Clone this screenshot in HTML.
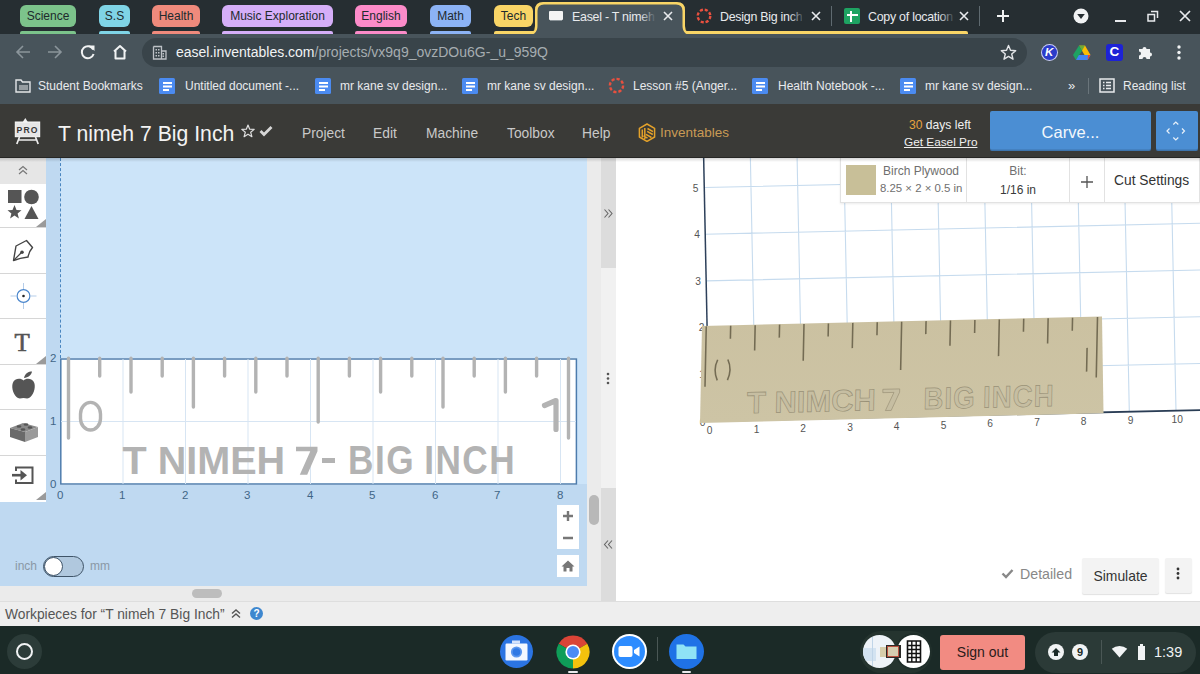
<!DOCTYPE html>
<html><head><meta charset="utf-8">
<style>
*{box-sizing:border-box;margin:0;padding:0}
html,body{width:1200px;height:674px;overflow:hidden;background:#fff;font-family:"Liberation Sans",sans-serif}
.abs{position:absolute}
#tabs{left:0;top:0;width:1200px;height:34px;background:#262e32}
.chip{position:absolute;top:5px;height:22px;border-radius:6px;font-size:12px;line-height:23px;text-align:center;color:#202a2d}
.gline{position:absolute;top:31px;height:4px;border-radius:2px 2px 0 0}
#toolbar{left:0;top:34px;width:1200px;height:70px;background:#48545b}
#omni{left:142px;top:38px;width:885px;height:29px;border-radius:15px;background:#39444a}
.bm{position:absolute;top:78px;font-size:12px;color:#e8eaed;line-height:16px;white-space:nowrap}
.doc{position:absolute;top:78px;width:16px;height:16px;background:#4b8bf1;border-radius:1.5px}
.doc:before{content:"";position:absolute;left:3.5px;top:3.5px;width:9px;height:2px;background:#fff;box-shadow:0 3.5px 0 #fff}
.doc:after{content:"";position:absolute;left:3.5px;top:10.5px;width:6px;height:2px;background:#fff}
.tabt{position:absolute;top:9px;font-size:12.4px;letter-spacing:-0.25px;color:#e8eaed;white-space:nowrap;line-height:16px}
#hdr{left:0;top:104px;width:1200px;height:54px;background:#3a3a37}
.mnu{top:126px;font-size:13.8px;line-height:16px;color:#c9c9c9;white-space:nowrap}
.lbl{font-size:11.5px;line-height:13px;color:#3f6687}
.l3{font-size:9px;line-height:11px;color:#444}
</style></head><body>
<div id="tabs" class="abs">
  <div class="chip" style="left:20px;width:56px;background:#7cc38b">Science</div>
  <div class="gline" style="left:20px;width:56px;background:#7cc38b"></div>
  <div class="chip" style="left:99px;width:31px;background:#7fd4e6">S.S</div>
  <div class="gline" style="left:99px;width:31px;background:#7fd4e6"></div>
  <div class="chip" style="left:152px;width:48px;background:#ef8a7c">Health</div>
  <div class="gline" style="left:152px;width:48px;background:#ef8a7c"></div>
  <div class="chip" style="left:222px;width:111px;background:#d5aef8">Music Exploration</div>
  <div class="gline" style="left:222px;width:111px;background:#d5aef8"></div>
  <div class="chip" style="left:355px;width:52px;background:#fc8bc9">English</div>
  <div class="gline" style="left:355px;width:52px;background:#fc8bc9"></div>
  <div class="chip" style="left:430px;width:41px;background:#8cb3f5">Math</div>
  <div class="gline" style="left:430px;width:41px;background:#8cb3f5"></div>
  <div class="chip" style="left:494px;width:39px;background:#f9d566">Tech</div>
  <!-- yellow group line -->
  <div class="gline" style="left:494px;width:474px;background:#f9d566"></div>
  <!-- active tab -->
  <svg class="abs" style="left:525px;top:0" width="170" height="36">
    <path d="M0 34 Q10 34 10 26 L10 10 Q10 2 18 2 L152 2 Q160 2 160 10 L160 26 Q160 34 170 34 L170 36 L0 36Z" fill="#f9d566"/>
    <path d="M0 36 Q12.5 36 12.5 26 L12.5 11 Q12.5 4.5 19 4.5 L151 4.5 Q157.5 4.5 157.5 11 L157.5 26 Q157.5 36 170 36Z" fill="#48545b"/>
  </svg>
  <div class="abs" style="left:549px;top:11px;width:14px;height:8.5px;background:#f4f4f4;border-radius:1px"></div><div class="abs" style="left:550px;top:19.5px;width:12px;height:1.5px;background:#8a9398"></div>
  <div class="tabt" style="left:572px;width:84px;overflow:hidden">Easel - T nimeh</div>
  <div class="abs" style="left:640px;top:6px;width:17px;height:20px;background:linear-gradient(90deg,rgba(72,84,91,0),#48545b 95%)"></div>
  <svg class="abs" style="left:663px;top:11px" width="10" height="10"><path d="M1 1L9 9M9 1L1 9" stroke="#e8eaed" stroke-width="1.6"/></svg>
  <!-- tab 2 -->
  <svg class="abs" style="left:696px;top:8px" width="16" height="16"><circle cx="8" cy="8" r="6.3" fill="none" stroke="#e8503f" stroke-width="2.4" stroke-dasharray="3.1 1.85"/></svg>
  <div class="tabt" style="left:720px;width:82px;overflow:hidden">Design Big inch</div>
  <div class="abs" style="left:789px;top:6px;width:17px;height:20px;background:linear-gradient(90deg,rgba(38,46,50,0),#262e32 95%)"></div>
  <svg class="abs" style="left:811px;top:11px" width="10" height="10"><path d="M1 1L9 9M9 1L1 9" stroke="#e8eaed" stroke-width="1.6"/></svg>
  <div class="abs" style="left:831px;top:6px;width:1px;height:20px;background:#5f6a70"></div>
  <!-- tab 3 -->
  <div class="abs" style="left:844px;top:8px;width:16px;height:16px;background:#1ea362;border-radius:2px"></div>
  <div class="abs" style="left:846.5px;top:13.5px;width:11px;height:2px;background:#fff"></div>
  <div class="abs" style="left:850px;top:10.5px;width:2px;height:11px;background:#fff"></div>
  <div class="tabt" style="left:868px;width:86px;overflow:hidden">Copy of location</div>
  <div class="abs" style="left:939px;top:6px;width:17px;height:20px;background:linear-gradient(90deg,rgba(38,46,50,0),#262e32 95%)"></div>
  <svg class="abs" style="left:959px;top:11px" width="10" height="10"><path d="M1 1L9 9M9 1L1 9" stroke="#e8eaed" stroke-width="1.6"/></svg>
  <div class="abs" style="left:979px;top:6px;width:1px;height:20px;background:#5f6a70"></div>
  <svg class="abs" style="left:996px;top:9px" width="14" height="14"><path d="M7 1V13M1 7H13" stroke="#f1f3f4" stroke-width="2"/></svg>
  <!-- window controls -->
  <svg class="abs" style="left:1073px;top:8px" width="16" height="16"><circle cx="8" cy="8" r="7.5" fill="#f1f3f4"/><path d="M4.2 6H11.8L8 11Z" fill="#262e32"/></svg>
  <div class="abs" style="left:1115px;top:20px;width:11px;height:2px;background:#e8eaed"></div>
  <svg class="abs" style="left:1147px;top:10px" width="12" height="12"><path d="M1 4.5H7.5V11H1Z M4 1.5H10.5V8" fill="none" stroke="#e8eaed" stroke-width="1.5"/></svg>
  <svg class="abs" style="left:1179px;top:10px" width="12" height="12"><path d="M1 1L11 11M11 1L1 11" stroke="#e8eaed" stroke-width="1.7"/></svg>
</div>
<div id="toolbar" class="abs"></div>
<!-- nav icons -->
<svg class="abs" style="left:15px;top:44px" width="16" height="16"><path d="M15 8H2M8 2L2 8L8 14" fill="none" stroke="#8b959b" stroke-width="1.6"/></svg>
<svg class="abs" style="left:47px;top:44px" width="16" height="16"><path d="M1 8H14M8 2L14 8L8 14" fill="none" stroke="#8b959b" stroke-width="1.6"/></svg>
<svg class="abs" style="left:79px;top:43px" width="18" height="18"><path d="M14.2 6.5A6 6 0 1 0 14.6 11" fill="none" stroke="#f1f3f4" stroke-width="2"/><path d="M10 2.5H15.5V8Z" fill="#f1f3f4"/></svg>
<svg class="abs" style="left:111px;top:43px" width="18" height="18"><path d="M3 8.5L9 3L15 8.5M4.5 7.5V15.5H13.5V7.5" fill="none" stroke="#f1f3f4" stroke-width="2" stroke-linejoin="round"/></svg>
<div id="omni" class="abs"></div>
<svg class="abs" style="left:152px;top:45px" width="15" height="15"><path d="M1.5 1.5H9.5V14M1.5 1.5V14H14V6H9.5" fill="none" stroke="#bdc1c6" stroke-width="1.3"/><path d="M3.5 4h1.5v1.5h-1.5zM6 4h1.5v1.5h-1.5zM3.5 7h1.5v1.5h-1.5zM6 7h1.5v1.5h-1.5zM3.5 10h1.5v1.5h-1.5zM6 10h1.5v1.5h-1.5zM10.5 8h1.5v1.5h-1.5zM10.5 10.5h1.5v1.5h-1.5z" fill="#bdc1c6"/></svg>
<div class="abs" style="left:176px;top:44px;font-size:14px;line-height:16px;color:#f1f3f4;white-space:nowrap">easel.inventables.com<span style="color:#a6adb1">/projects/vx9q9_ovzDOu6G-_u_959Q</span></div>
<svg class="abs" style="left:1000px;top:44px" width="17" height="17"><path d="M8.5 1.5L10.5 6.3L15.7 6.7L11.7 10L13 15.2L8.5 12.4L4 15.2L5.3 10L1.3 6.7L6.5 6.3Z" fill="none" stroke="#e3e5e8" stroke-width="1.4" stroke-linejoin="round"/></svg>
<!-- extensions -->
<div class="abs" style="left:1041.5px;top:44.5px;width:15.5px;height:15.5px;border-radius:50%;background:#2b3bc9;color:#fff;font:bold italic 11.5px/15.5px 'Liberation Sans',sans-serif;text-align:center;box-shadow:0 0 0 1px #c9cdf5">K</div>
<svg class="abs" style="left:1073px;top:45px" width="18" height="15"><path d="M6 0.5H12L17.5 10H11.5Z" fill="#fbbc04"/><path d="M6 0.5L9 5.7L3 15L0 10Z" fill="#1ea362"/><path d="M3 15L5.9 10H17.5L14.6 15Z" fill="#4285f4"/><path d="M14.6 15L17.5 10H15Z" fill="#ea4335"/><path d="M6 0.5L9 5.7L12 0.5Z" fill="#0f9d58" opacity=".6"/></svg>
<div class="abs" style="left:1106px;top:44px;width:16.5px;height:16.5px;border-radius:3px;background:#1d22d6;color:#fff;font:bold 13.5px/16.5px 'Liberation Sans',sans-serif;text-align:center">C</div>
<svg class="abs" style="left:1137px;top:44px" width="16" height="16"><path d="M2 5H5.5A2 2 0 1 1 9.5 5H13V8.5A2 2 0 1 1 13 12.5V15H9.5A2 2 0 1 0 5.5 15H2V11.5A2 2 0 1 0 2 7.5Z" fill="#f1f3f4"/></svg>
<svg class="abs" style="left:1176px;top:44px" width="6" height="17"><circle cx="3" cy="3" r="1.7" fill="#f1f3f4"/><circle cx="3" cy="8.5" r="1.7" fill="#f1f3f4"/><circle cx="3" cy="14" r="1.7" fill="#f1f3f4"/></svg>
<!-- bookmarks -->
<svg class="abs" style="left:15px;top:79px" width="16" height="14"><path d="M1 1H6L7.5 3H15V13H1Z" fill="none" stroke="#e3e6e8" stroke-width="1.4"/><path d="M4 6h9v5h-9z" fill="#e3e6e8" opacity=".5"/></svg>
<div class="bm" style="left:38px">Student Bookmarks</div>
<div class="doc" style="left:159px"></div><div class="bm" style="left:185px">Untitled document -...</div>
<div class="doc" style="left:315px"></div><div class="bm" style="left:340px">mr kane sv design...</div>
<div class="doc" style="left:462px"></div><div class="bm" style="left:487px">mr kane sv design...</div>
<svg class="abs" style="left:608px;top:77px" width="17" height="17"><circle cx="8.5" cy="8.5" r="6.6" fill="none" stroke="#e8503f" stroke-width="2.4" stroke-dasharray="3.2 1.95"/></svg>
<div class="bm" style="left:633px">Lesson #5 (Anger...</div>
<div class="doc" style="left:752px"></div><div class="bm" style="left:778px">Health Notebook -...</div>
<div class="doc" style="left:900px"></div><div class="bm" style="left:925px">mr kane sv design...</div>
<div class="bm" style="left:1068px;font-size:13px">»</div>
<div class="abs" style="left:1088px;top:78px;width:1px;height:16px;background:#6a757b"></div>
<svg class="abs" style="left:1099px;top:78px" width="16" height="15"><rect x="1" y="1" width="14" height="13" fill="none" stroke="#e8eaed" stroke-width="1.5"/><path d="M4 4.5h1.5M7 4.5h5M4 7.5h1.5M7 7.5h5M4 10.5h1.5M7 10.5h5" stroke="#e8eaed" stroke-width="1.3"/></svg>
<div class="bm" style="left:1123px">Reading list</div>


<div id="hdr" class="abs"></div>
<!-- PRO icon -->
<svg class="abs" style="left:13px;top:116px" width="28" height="30"><path d="M12.3 2L15 6.3H9.6Z" fill="#eee"/><rect x="2.3" y="6" width="24.4" height="14.7" fill="#e6e6e6" stroke="#fafafa" stroke-width="1"/><path d="M6.5 21L3.8 28M22.5 21L25.2 28M5.6 24H23.4" stroke="#eee" stroke-width="1.7"/><text x="14.6" y="16.6" font-family="Liberation Sans" font-weight="bold" font-size="8.6" text-anchor="middle" fill="#383838" letter-spacing="1.2">PRO</text></svg>
<div class="abs" style="left:58px;top:121.5px;font-size:21.2px;line-height:24px;color:#f3f3f3;white-space:nowrap">T nimeh 7 Big Inch</div>
<svg class="abs" style="left:241px;top:124px" width="14" height="14"><path d="M7 1L8.7 5.2L13.2 5.4L9.7 8.3L10.9 12.7L7 10.2L3.1 12.7L4.3 8.3L0.8 5.4L5.3 5.2Z" fill="none" stroke="#e0e0e0" stroke-width="1.2" stroke-linejoin="round"/></svg>
<svg class="abs" style="left:259px;top:125px" width="14" height="12"><path d="M1.5 6L5 9.5L12.5 2" fill="none" stroke="#d6d6d6" stroke-width="2.8"/></svg>
<div class="abs mnu" style="left:302px">Project</div>
<div class="abs mnu" style="left:373px">Edit</div>
<div class="abs mnu" style="left:426px">Machine</div>
<div class="abs mnu" style="left:507px">Toolbox</div>
<div class="abs mnu" style="left:582px">Help</div>
<svg class="abs" style="left:638px;top:123px" width="18" height="19"><g fill="none" stroke="#e3a12a" stroke-width="1.5" stroke-linejoin="round"><path d="M9 1L16.6 5.4V14L9 18.4L1.4 14V5.4Z"/><path d="M4.3 6.5V14.5M6.8 5V16M9.5 5.5L15 8.6M9.2 8.3L14.8 11.5M5.5 12.8L9.5 15.2M8 11.3L13.5 14.5"/></g></svg>
<div class="abs" style="left:660px;top:125px;font-size:13.5px;line-height:16px;color:#c99a55;white-space:nowrap">Inventables</div>
<div class="abs" style="left:909px;top:118px;font-size:12.1px;line-height:14px;color:#f0f0f0;white-space:nowrap"><span style="color:#e7a33e">30</span> days left</div>
<div class="abs" style="left:904px;top:135px;font-size:11.8px;line-height:14px;color:#f0f0f0;white-space:nowrap;text-decoration:underline">Get Easel Pro</div>
<div class="abs" style="left:990px;top:111px;width:161px;height:40px;background:#4b8ed3;border-radius:2px;box-shadow:inset 0 -1.5px 0 rgba(0,0,0,.18);color:#f4f8fc;font-size:16.5px;line-height:43px;text-align:center">Carve...</div>
<div class="abs" style="left:1156px;top:111px;width:42px;height:40px;background:#4b8ed3;border-radius:2px;box-shadow:inset 0 -1.5px 0 rgba(0,0,0,.18)"></div>
<svg class="abs" style="left:1163px;top:118px" width="26" height="26"><path d="M10.3 6.5L12.8 4L15.3 6.5M10.3 19.5L12.8 22L15.3 19.5M6.5 10.5L4 13L6.5 15.5M19 10.5L21.5 13L19 15.5" fill="none" stroke="#e8f1fa" stroke-width="1.2"/></svg>

<!-- main 2D canvas -->
<div class="abs" style="left:0;top:158px;width:587px;height:428px;background:#bfd9f1"></div>
<div class="abs" style="left:60px;top:158px;width:527px;height:326px;background:#cce4f9"></div>
<div class="abs" style="left:60px;top:158px;width:0;height:200px;border-left:1px dashed #4a86c0"></div>
<!-- workpiece -->
<div class="abs" style="left:60px;top:358px;width:517px;height:127px;background:#fff"></div>
<svg class="abs" style="left:0;top:0" width="600" height="500"><rect x="60.8" y="359" width="515.6" height="125" fill="none" stroke="#4d7cad" stroke-width="1.5"/></svg>
<svg class="abs" style="left:0;top:150px" width="600" height="360">
  <g stroke="#d7e5f3" stroke-width="1">
    <path d="M123 209V334M185.5 209V334M248 209V334M310.5 209V334M373 209V334M435.5 209V334M498 209V334M560.5 209V334M61 271.5H576"/>
  </g>
  <g stroke="#b3b3b3" stroke-width="3.4" stroke-linecap="round">
    <path d="M68.5 208.3V288M99.7 208.3V226M131 208.3V242M162.2 208.3V226M193.4 208.3V257M224.6 208.3V226M255.8 208.3V242M287 208.3V226M318.2 208.3V272M349.4 208.3V226M380.6 208.3V242M411.8 208.3V226M443 208.3V257M474.2 208.3V226M505.4 208.3V242M536.6 208.3V226M568.5 208.3V288"/>
  </g>
</svg>
<svg class="abs" style="left:70px;top:390px" width="40" height="50"><rect x="10.5" y="12.4" width="20" height="27.6" rx="10" ry="11.5" fill="none" stroke="#b3b3b3" stroke-width="3.4"/></svg>
<svg class="abs" style="left:535px;top:390px" width="30" height="50"><path d="M21 39.5V10.5L9.5 15.5" fill="none" stroke="#b3b3b3" stroke-width="5.2" stroke-linecap="round" stroke-linejoin="round"/></svg>
<div class="abs" style="left:122.5px;top:440.3px;font-size:39.6px;line-height:40px;font-weight:bold;color:#b3b3b3;white-space:nowrap">T NIMEH</div>
<svg class="abs" style="left:0;top:0" width="600" height="500"><path d="M296 446.8H317.5V451.2L307.2 474.7H299.8L310.3 451.2H296Z" fill="#b3b3b3"/></svg>
<div class="abs" style="left:322px;top:457.5px;width:13px;height:5.5px;background:#b3b3b3"></div>
<div class="abs" style="left:348px;top:440px;font-size:40px;line-height:40px;font-weight:bold;color:#b3b3b3;white-space:nowrap;transform:scaleX(0.88);transform-origin:0 0;letter-spacing:1.7px;word-spacing:-2.5px">BIG INCH</div>
<div class="abs lbl" style="left:50px;top:352px">2</div>
<div class="abs lbl" style="left:50px;top:415px">1</div>
<div class="abs lbl" style="left:50px;top:478px">0</div>
<div class="abs lbl" style="left:57px;top:488.5px">0</div>
<div class="abs lbl" style="left:119px;top:488.5px">1</div>
<div class="abs lbl" style="left:182px;top:488.5px">2</div>
<div class="abs lbl" style="left:244px;top:488.5px">3</div>
<div class="abs lbl" style="left:307px;top:488.5px">4</div>
<div class="abs lbl" style="left:369px;top:488.5px">5</div>
<div class="abs lbl" style="left:432px;top:488.5px">6</div>
<div class="abs lbl" style="left:494px;top:488.5px">7</div>
<div class="abs lbl" style="left:557px;top:488.5px">8</div>

<!-- left tool bar -->
<div class="abs" style="left:0;top:158px;width:46px;height:26px;background:#e6e6e6"></div>
<svg class="abs" style="left:17px;top:165px" width="12" height="10"><path d="M2 5L6 1.5L10 5M2 9L6 5.5L10 9" fill="none" stroke="#777" stroke-width="1.2"/></svg>
<div class="abs" style="left:0;top:184px;width:46px;height:318px;background:#fff"></div>
<div class="abs" style="left:0;top:227px;width:46px;height:1px;background:#d6d6d6"></div>
<div class="abs" style="left:0;top:273px;width:46px;height:1px;background:#d6d6d6"></div>
<div class="abs" style="left:0;top:318px;width:46px;height:1px;background:#d6d6d6"></div>
<div class="abs" style="left:0;top:364px;width:46px;height:1px;background:#d6d6d6"></div>
<div class="abs" style="left:0;top:409px;width:46px;height:1px;background:#d6d6d6"></div>
<div class="abs" style="left:0;top:455px;width:46px;height:1px;background:#d6d6d6"></div>
<svg class="abs" style="left:0;top:184px" width="46" height="317">
  <path d="M46 35L36 43H46Z M46 172L36 180H46Z M46 308L36 316H46Z" fill="#9a9a9a"/>
  <rect x="8" y="6" width="13.5" height="13" fill="#555"/>
  <circle cx="31.5" cy="13" r="7.3" fill="#555"/>
  <path d="M14.5 21L16.5 26L21.5 26.3L17.6 29.4L18.9 34.5L14.5 31.6L10.1 34.5L11.4 29.4L7.5 26.3L12.5 26Z" fill="#555"/>
  <path d="M31.5 22L38.5 35H24.5Z" fill="#555"/>
  <g transform="translate(3,47)">
    <path d="M10.5 29.5Q12 21 13 15L23.5 9.5L29.5 16.5Q26 20.5 25 26Q17 27 10.5 29.5Z" fill="none" stroke="#444" stroke-width="1.4" stroke-linejoin="round"/>
    <path d="M10.5 29.5L18 22" stroke="#444" stroke-width="1.2"/>
    <circle cx="19" cy="21.2" r="1.8" fill="#444"/>
  </g>
  <g transform="translate(0,89)">
    <circle cx="23.5" cy="23" r="6.4" fill="none" stroke="#4a86cc" stroke-width="1.2"/>
    <circle cx="23.5" cy="23" r="1.3" fill="#222"/>
    <path d="M23.5 10V16M23.5 30V36M10.5 23H16.5M30.5 23H36.5" stroke="#b5cde9" stroke-width="1"/>
  </g>
</svg>
<div class="abs" style="left:14.5px;top:327.5px;font-family:'Liberation Serif',serif;font-size:25px;line-height:30px;font-weight:normal;color:#555;-webkit-text-stroke:0.6px #555">T</div>
<svg class="abs" style="left:0;top:364px" width="46" height="137">
  <path d="M23.5 16.5C21 14 14.5 14 12.8 19C11 24 14 32 18 34C20 35 21.5 34 23.5 34C25.5 34 27 35 29 34C33 32 36 24 34.3 19C32.5 14 26 14 23.5 16.5Z" fill="#555"/>
  <path d="M24 14C25 9 28.5 7.5 32 7.5C31.5 11 28 13.5 24 14Z" fill="#555"/>
  <g transform="translate(1,47)">
    <path d="M9 17L22 12L37 16L24 21Z" fill="#8a8a8a"/>
    <path d="M9 17V26L24 31V21Z" fill="#6a6a6a"/>
    <path d="M24 21V31L37 26V16Z" fill="#9a9a9a"/>
    <ellipse cx="18" cy="15.5" rx="2.4" ry="1.3" fill="#555"/><ellipse cx="25" cy="13.5" rx="2.4" ry="1.3" fill="#555"/>
    <ellipse cx="22" cy="18.5" rx="2.4" ry="1.3" fill="#555"/><ellipse cx="29" cy="16.5" rx="2.4" ry="1.3" fill="#555"/>
  </g>
  <g transform="translate(0,91)">
    <path d="M16 16V12.5H32.5V28H16V24.5" fill="none" stroke="#555" stroke-width="2"/>
    <path d="M12 20.2H24" stroke="#555" stroke-width="2.6"/>
    <path d="M20.5 15L27 20.2L20.5 25.4Z" fill="#555"/>
  </g>
</svg>

<!-- toggle -->
<div class="abs" style="left:15px;top:559px;font-size:12px;line-height:14px;color:#8a98a6">inch</div>
<div class="abs" style="left:43px;top:556px;width:41px;height:21px;border-radius:11px;background:#b0c8de;border:1px solid #3f5468"></div>
<div class="abs" style="left:44px;top:557px;width:19px;height:19px;border-radius:50%;background:#fff;border:1px solid #3f5468"></div>
<div class="abs" style="left:90px;top:559px;font-size:12px;line-height:14px;color:#8a98a6">mm</div>
<!-- zoom controls -->
<div class="abs" style="left:557px;top:505px;width:22px;height:44px;background:#fff"></div>
<svg class="abs" style="left:560px;top:508px" width="16" height="38"><path d="M8 3V13M3 8H13M3 30H13" stroke="#777" stroke-width="2.4"/></svg>
<div class="abs" style="left:557px;top:555px;width:22px;height:22px;background:#fff"></div>
<svg class="abs" style="left:560px;top:559px" width="16" height="14"><path d="M8 1.5L1.5 7.5H3.5V12.5H6.5V9H9.5V12.5H12.5V7.5H14.5Z" fill="#777"/></svg>
<!-- scroll strip -->
<div class="abs" style="left:587px;top:158px;width:14px;height:443px;background:#ebebeb"></div>
<div class="abs" style="left:589px;top:495px;width:10px;height:30px;border-radius:5px;background:#b8b8b8"></div>
<div class="abs" style="left:0;top:586px;width:587px;height:15px;background:#ebebeb"></div>
<div class="abs" style="left:192px;top:589px;width:30px;height:9px;border-radius:5px;background:#bdbdbd"></div>
<!-- divider -->
<div class="abs" style="left:601px;top:158px;width:15px;height:443px;background:#f1f1f1"></div>
<div class="abs" style="left:601px;top:158px;width:15px;height:110px;background:#dcdcdc"></div>
<div class="abs" style="left:601px;top:488px;width:15px;height:113px;background:#dcdcdc"></div>
<svg class="abs" style="left:603px;top:208px" width="11" height="11"><path d="M1.5 1.5L5 5.5L1.5 9.5M5.5 1.5L9 5.5L5.5 9.5" fill="none" stroke="#666" stroke-width="1.1"/></svg>
<svg class="abs" style="left:603px;top:539px" width="11" height="11"><path d="M5 1.5L1.5 5.5L5 9.5M9 1.5L5.5 5.5L9 9.5" fill="none" stroke="#666" stroke-width="1.1"/></svg>
<svg class="abs" style="left:606px;top:372px" width="4" height="13"><circle cx="2" cy="2" r="1.3" fill="#555"/><circle cx="2" cy="6.5" r="1.3" fill="#555"/><circle cx="2" cy="11" r="1.3" fill="#555"/></svg>

<!-- bottom workpieces bar -->
<div class="abs" style="left:0;top:601px;width:1200px;height:25px;background:#eeeeee;border-top:1px solid #dedede"></div>
<div class="abs" style="left:5px;top:606px;font-size:13.8px;line-height:17px;color:#555;white-space:nowrap">Workpieces for “T nimeh 7 Big Inch”</div>
<svg class="abs" style="left:230px;top:608px" width="12" height="11"><path d="M2 5.5L6 2L10 5.5M2 9.5L6 6L10 9.5" fill="none" stroke="#555" stroke-width="1.4"/></svg>
<div class="abs" style="left:250px;top:607px;width:13px;height:13px;border-radius:50%;background:#3d87cf;color:#fff;font:bold 10px/13px 'Liberation Sans',sans-serif;text-align:center">?</div>

<!-- 3D pane -->
<svg class="abs" style="left:0;top:0" width="1200" height="674">
  <defs><clipPath id="c3"><rect x="616" y="158" width="584" height="443"/></clipPath>
  <linearGradient id="bd" x1="0" y1="0" x2="0" y2="1"><stop offset="0" stop-color="#cbc1a1"/><stop offset="1" stop-color="#cdc4a5"/></linearGradient></defs>
  <g clip-path="url(#c3)">
  <g stroke="#c6dbee" stroke-width="1.1" fill="none">
    <path d="M755.7 420.0L750.2 149.1M802.4 418.9L796.9 148.1M849.1 417.9L843.6 147.1M895.8 416.9L890.3 146.0M942.5 415.9L937.0 145.0M989.2 414.8L983.7 144.0M1035.9 413.8L1030.4 142.9M1082.6 412.8L1077.1 141.9M1129.3 411.7L1123.8 140.9M1176.0 410.7L1170.5 139.8M708.1 374.3L1221.8 363.0M707.1 327.6L1221.8 316.3M706.2 280.9L1219.9 269.6M705.2 234.2L1218.9 222.9M704.3 187.5L1218.0 176.2"/>
  </g>
  <path d="M709 421L703.5 150" stroke="#2d405a" stroke-width="1.5"/>
  <path d="M709 421L1222.7 409.7" stroke="#2a3d55" stroke-width="1.8"/>
  <g font-family="Liberation Sans" font-size="10.2" fill="#555" text-anchor="middle"><text x="709.7" y="434.2">0</text><text x="756.5" y="433.1">1</text><text x="803.2" y="431.9">2</text><text x="850.0" y="430.8">3</text><text x="896.7" y="429.6">4</text><text x="943.5" y="428.5">5</text><text x="990.2" y="427.4">6</text><text x="1037.0" y="426.2">7</text><text x="1083.7" y="425.1">8</text><text x="1130.5" y="423.9">9</text><text x="1177.2" y="422.8">10</text><text x="702.5" y="425.8">0</text><text x="702.0" y="377.8">1</text><text x="701.5" y="330.8">2</text><text x="698.0" y="284.8">3</text><text x="697.0" y="238.3">4</text><text x="695.5" y="191.8">5</text></g>
  <path d="M702 326L1102 316.5L1103.5 413.3L700 423Z" fill="url(#bd)"/>
  <g transform="matrix(0.7825,-0.0186,-0.016,0.765,658.4,53)">
    <g stroke="#736b53" stroke-width="2" stroke-linecap="butt">
      <path d="M68.5 359V438M99.7 359V376M131 359V392M162.2 359V376M193.4 359V407M224.6 359V376M255.8 359V392M287 359V376M318.2 359V422M349.4 359V376M380.6 359V392M411.8 359V376M443 359V407M474.2 359V376M505.4 359V392M536.6 359V376M568.5 359V438M556 399V430"/>
    </g>
    <path d="M84 403Q78 416 84 430M97 403Q103 416 97 430" fill="none" stroke="#736b53" stroke-width="2"/>
    <g font-family="Liberation Sans" font-weight="bold" fill="#c6bea2" stroke="#8a8269" stroke-width="0.9" stroke-opacity="0.75">
      <text x="122.5" y="474" font-size="39.6">T NIMCH</text>
      <path d="M296 446.8H317.5V451.2L307.2 474.7H299.8L310.3 451.2H296Z"/>
      <g transform="translate(348,0) scale(0.88,1)"><text x="0" y="474" font-size="40" letter-spacing="1.7" word-spacing="-2.5">BIG INCH</text></g>
    </g>
  </g>
  </g>
</svg>
<!-- material popup -->
<div class="abs" style="left:840px;top:158px;width:360px;height:45px;background:#fff;border:1px solid #e2e2e2;border-top:none;box-shadow:0 1px 2px rgba(0,0,0,.08)"></div>
<div class="abs" style="left:846px;top:165px;width:30px;height:30px;background:#c8bf98"></div>
<div class="abs" style="left:883px;top:164px;font-size:12px;line-height:14px;color:#6f6f6f;white-space:nowrap">Birch Plywood</div>
<div class="abs" style="left:880px;top:181px;font-size:11.4px;line-height:14px;color:#6f6f6f;white-space:nowrap">8.25 × 2 × 0.5 in</div>
<div class="abs" style="left:966px;top:158px;width:1px;height:45px;background:#e2e2e2"></div>
<div class="abs" style="left:967px;top:164px;width:102px;font-size:12px;line-height:14px;color:#6f6f6f;text-align:center">Bit:</div>
<div class="abs" style="left:967px;top:182.5px;width:102px;font-size:12px;line-height:14px;color:#3a3a3a;text-align:center">1/16 in</div>
<div class="abs" style="left:1069px;top:158px;width:1px;height:45px;background:#e2e2e2"></div>
<svg class="abs" style="left:1080px;top:175px" width="14" height="14"><path d="M7 1V13M1 7H13" stroke="#555" stroke-width="1.3"/></svg>
<div class="abs" style="left:1104px;top:158px;width:1px;height:45px;background:#e2e2e2"></div>
<div class="abs" style="left:1114px;top:173px;font-size:13.8px;line-height:16px;color:#333;white-space:nowrap">Cut Settings</div>

<!-- simulate row -->
<svg class="abs" style="left:1001px;top:568px" width="13" height="11"><path d="M1.5 5.5L5 9L11.5 2" fill="none" stroke="#888" stroke-width="2.4"/></svg>
<div class="abs" style="left:1020px;top:566px;font-size:14.2px;line-height:16px;color:#888;white-space:nowrap">Detailed</div>
<div class="abs" style="left:1082px;top:558px;width:77px;height:36px;background:#f3f3f3;border-radius:2px;box-shadow:0 1px 1px rgba(0,0,0,.12)"></div>
<div class="abs" style="left:1082px;top:568px;width:77px;font-size:13.9px;line-height:16px;color:#333;text-align:center">Simulate</div>
<div class="abs" style="left:1165px;top:558px;width:27px;height:35px;background:#f3f3f3;border-radius:2px;box-shadow:0 1px 1px rgba(0,0,0,.12)"></div>
<svg class="abs" style="left:1176px;top:567px" width="4" height="13"><circle cx="2" cy="2" r="1.4" fill="#333"/><circle cx="2" cy="6.5" r="1.4" fill="#333"/><circle cx="2" cy="11" r="1.4" fill="#333"/></svg>

<!-- shelf -->
<div class="abs" style="left:0;top:626px;width:1200px;height:48px;background:#1b2a27"></div>
<div class="abs" style="left:7px;top:634px;width:35px;height:35px;border-radius:50%;background:#2c3c39"></div>
<div class="abs" style="left:16px;top:643px;width:17px;height:17px;border-radius:50%;border:2px solid #f1f3f4"></div>
<!-- camera -->
<div class="abs" style="left:500px;top:635px;width:33px;height:33px;border-radius:50%;background:#2b74e2"></div>
<svg class="abs" style="left:503px;top:638px" width="27" height="26"><path d="M9 2.5H17V5.5H9Z" fill="#d5e3fb"/><rect x="2.5" y="5.5" width="22" height="17" rx="1.2" fill="#f4f8ff"/><circle cx="13.5" cy="14" r="5.6" fill="#5a96ee"/><circle cx="13.5" cy="14" r="3.8" fill="#2f78e4"/></svg>
<!-- chrome -->
<svg class="abs" style="left:556px;top:635px" width="34" height="34">
  <path d="M17 17L2.7 8.75A16.5 16.5 0 0 1 31.3 8.75Z" fill="#db4437"/>
  <path d="M17 17L31.3 8.75A16.5 16.5 0 0 1 17 33.5Z" fill="#f4c20d"/>
  <path d="M17 17L17 33.5A16.5 16.5 0 0 1 2.7 8.75Z" fill="#0f9d58"/>
  <circle cx="17" cy="17" r="7.6" fill="#fff"/>
  <circle cx="17" cy="17" r="6" fill="#4c8bf5"/>
</svg>
<div class="abs" style="left:568px;top:671px;width:10px;height:2px;background:#e8eaed;border-radius:1px"></div>
<!-- zoom -->
<div class="abs" style="left:612px;top:634px;width:35px;height:35px;border-radius:50%;background:#fff"></div>
<div class="abs" style="left:614px;top:636px;width:31px;height:31px;border-radius:50%;background:#2d8cff"></div>
<svg class="abs" style="left:617px;top:643px" width="25" height="17"><rect x="1.5" y="3" width="14" height="11" rx="2" fill="#fff"/><path d="M17 7L22.5 3.5V13.5L17 10Z" fill="#fff"/></svg>
<div class="abs" style="left:657px;top:637px;width:1px;height:24px;background:#4a5755"></div>
<!-- files -->
<div class="abs" style="left:669px;top:634px;width:35px;height:35px;border-radius:50%;background:#1f72e6"></div>
<svg class="abs" style="left:675px;top:642px" width="23" height="19"><path d="M1.5 2.5H8.5L10.5 4.5H21.5V17H1.5Z" fill="#8fe3f6"/></svg>
<div class="abs" style="left:682px;top:671px;width:9px;height:2px;background:#e8eaed;border-radius:1px"></div>
<!-- holding space -->
<div class="abs" style="left:860px;top:631px;width:72px;height:42px;border-radius:21px;background:#25342f"></div>
<div class="abs" style="left:863px;top:635px;width:33px;height:33px;border-radius:50%;background:#eef3f8;overflow:hidden">
  <div style="position:absolute;left:0;top:13px;width:13px;height:13px;background:#d3e3f1"></div>
  <div style="position:absolute;left:9px;top:2px;width:1px;height:29px;background:#c0d5e8"></div>
  <div style="position:absolute;left:17px;top:12px;width:16px;height:10px;background:#d6cdab"></div>
</div>
<div class="abs" style="left:895px;top:633px;width:37px;height:37px;border-radius:50%;background:#1f2e2a"></div>
<div class="abs" style="left:897px;top:635px;width:33px;height:33px;border-radius:50%;background:#fff"></div>
<svg class="abs" style="left:905px;top:639px" width="18" height="25"><path d="M2.5 2H15.5V23H2.5Z" fill="none" stroke="#111" stroke-width="1.6"/><path d="M2.5 6.5H15.5M2.5 10.5H15.5M2.5 14.5H15.5M2.5 18.5H15.5M6.8 2V23M11.2 2V23" stroke="#111" stroke-width="1.4"/></svg>
<div class="abs" style="left:886px;top:645px;width:15px;height:13px;background:#2a2a28"></div>
<div class="abs" style="left:887px;top:646px;width:12px;height:11px;border:1.6px solid #b8503f;background:#d6cdb0"></div>
<!-- sign out -->
<div class="abs" style="left:940px;top:635px;width:85px;height:35px;border-radius:3px;background:#f28b82;color:#2a1b1a;font-size:14px;line-height:35px;text-align:center">Sign out</div>
<!-- status -->
<div class="abs" style="left:1035px;top:632px;width:161px;height:41px;border-radius:20.5px;background:#2b3a37"></div>
<div class="abs" style="left:1048px;top:644px;width:16px;height:16px;border-radius:50%;background:#f1f3f4"></div>
<svg class="abs" style="left:1050px;top:646px" width="12" height="12"><path d="M6 2L10.5 6.5H8V10H4V6.5H1.5Z" fill="#1b2a27"/></svg>
<div class="abs" style="left:1072px;top:644px;width:16px;height:16px;border-radius:50%;background:#f1f3f4;color:#1b2a27;font:bold 11px/16px 'Liberation Sans',sans-serif;text-align:center">9</div>
<div class="abs" style="left:1101px;top:640px;width:1px;height:24px;background:#4a5755"></div>
<svg class="abs" style="left:1111px;top:645px" width="17" height="13"><path d="M8.5 12.5L0.8 3.8A12 12 0 0 1 16.2 3.8Z" fill="#f1f3f4"/></svg>
<svg class="abs" style="left:1137px;top:643px" width="9" height="18"><path d="M3 1H6V3H8V17H1V3H3Z" fill="#f1f3f4"/></svg>
<div class="abs" style="left:1154px;top:643px;font-size:14.5px;line-height:18px;color:#f1f3f4">1:39</div>
<div class="abs" style="left:0;top:157px;width:1200px;height:1px;background:#262624"></div>
<div class="abs" style="left:0;top:158px;width:1200px;height:4px;background:linear-gradient(rgba(0,0,0,.16),rgba(0,0,0,0))"></div>

</body></html>
